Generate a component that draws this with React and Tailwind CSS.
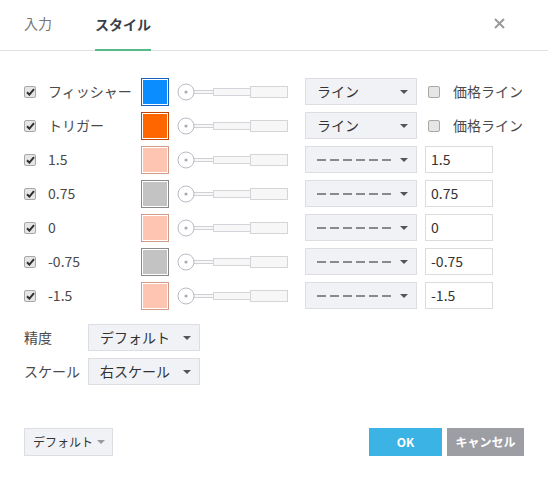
import React from "react";

const font = { fontFamily: '"Noto Sans CJK JP", "Noto Sans", sans-serif' };

const rows = [
  { label: "フィッシャー", fill: "bg-[#0a8dff]", border: "border-[#1560bd]", kind: "line", value: "ライン" },
  { label: "トリガー", fill: "bg-[#ff6600]", border: "border-[#c24400]", kind: "line", value: "ライン" },
  { label: "1.5", fill: "bg-[#ffc5b3]", border: "border-[#d49a88]", kind: "dash", value: "1.5" },
  { label: "0.75", fill: "bg-[#c3c3c3]", border: "border-[#8a8a8a]", kind: "dash", value: "0.75" },
  { label: "0", fill: "bg-[#ffc5b3]", border: "border-[#d49a88]", kind: "dash", value: "0" },
  { label: "-0.75", fill: "bg-[#c3c3c3]", border: "border-[#8a8a8a]", kind: "dash", value: "-0.75" },
  { label: "-1.5", fill: "bg-[#ffc5b3]", border: "border-[#d49a88]", kind: "dash", value: "-1.5" },
];

function Check({ checked }) {
  return (
    <span className="w-[12px] h-[12px] rounded-[2px] border border-[#a8a8a8] bg-[#e6e6e6] flex items-center justify-center shrink-0">
      {checked && (
        <svg width="9" height="8" viewBox="0 0 9 8">
          <path d="M1 4.2 L3.4 6.6 L8 1.2" stroke="#2f2f2f" strokeWidth="2" fill="none" />
        </svg>
      )}
    </span>
  );
}

function Caret({ color = "#555" }) {
  return (
    <svg width="8" height="4" viewBox="0 0 8 4">
      <path d="M0 0 H8 L4 4 Z" fill={color} />
    </svg>
  );
}

function Slider() {
  return (
    <svg width="112" height="18" viewBox="0 0 112 18" className="shrink-0">
      <rect x="16.5" y="7.5" width="20" height="3" fill="#f7f7f7" stroke="#cfd1d6" />
      <rect x="36.5" y="5.5" width="37" height="7" fill="#f7f7f7" stroke="#d4d5d8" />
      <rect x="73.5" y="3.5" width="37" height="11" fill="#f7f7f7" stroke="#d4d5d8" />
      <circle cx="9" cy="9" r="8" fill="#fff" stroke="#b9bcc6" />
      <circle cx="9" cy="9" r="1.6" fill="#a9acb6" />
    </svg>
  );
}

function Select({ w, children, caretColor }) {
  return (
    <div
      className={`${w} h-[27px] bg-[#f1f2f6] border border-[#dcdee3] flex items-center justify-between pl-[11px] pr-[8px] text-[14px] text-[#333] shrink-0`}
    >
      <span className="flex items-center">{children}</span>
      <Caret color={caretColor} />
    </div>
  );
}

function Dashes() {
  return (
    <svg width="74" height="2" viewBox="0 0 74 2">
      <line x1="0" y1="1" x2="74" y2="1" stroke="#8a8a8a" strokeWidth="2" strokeDasharray="9 4" />
    </svg>
  );
}

export default function App() {
  return (
    <div className="w-[548px] h-[481px] bg-white flex flex-col text-[#4a4a4a]" style={font}>
      <div className="h-[51px] border-b border-[#e1e1e1] flex items-end justify-between pl-[24px] pr-[43px] shrink-0">
        <div className="flex items-end gap-[43px]">
          <div className="pb-[16px] text-[14px] text-[#777]">入力</div>
          <div className="pb-[14px] border-b-2 border-[#55b98a] text-[14px] font-bold text-[#3a3f4a] -mb-px">
            スタイル
          </div>
        </div>
        <svg width="11" height="11" viewBox="0 0 11 11" className="mb-[21px]">
          <path d="M1 1 L10 10 M10 1 L1 10" stroke="#9a9a9a" strokeWidth="2" />
        </svg>
      </div>

      <div className="flex flex-col gap-[7px] pl-[24px] pt-[27px]">
        {rows.map((r, i) => (
          <div key={i} className="h-[27px] flex items-center">
            <Check checked />
            <span className="ml-[12px] w-[93px] text-[14px] text-[#4a4a4a]">{r.label}</span>
            <span className={`w-[28px] h-[28px] border ${r.border} p-px bg-white shrink-0`}>
              <span className={`block w-full h-full ${r.fill}`} />
            </span>
            <span className="ml-[8px]">
              <Slider />
            </span>
            <span className="ml-[16px]">
              <Select w="w-[112px]">
                {r.kind === "line" ? "ライン" : <Dashes />}
              </Select>
            </span>
            {r.kind === "line" ? (
              <span className="ml-[11px] flex items-center">
                <Check />
                <span className="ml-[13px] text-[14px]">価格ライン</span>
              </span>
            ) : (
              <span className="ml-[8px] w-[68px] h-[27px] border border-[#dcdcdc] bg-white flex items-center pl-[5px] text-[14px] text-[#333]">
                {r.value}
              </span>
            )}
          </div>
        ))}
      </div>

      <div className="flex flex-col gap-[7px] pl-[24px] pt-[15px]">
        <div className="flex items-center h-[27px]">
          <span className="w-[64px] text-[14px]">精度</span>
          <Select w="w-[112px]">デフォルト</Select>
        </div>
        <div className="flex items-center h-[27px]">
          <span className="w-[64px] text-[14px]">スケール</span>
          <Select w="w-[112px]">右スケール</Select>
        </div>
      </div>

      <div className="flex items-center justify-between pl-[24px] pr-[24px] mt-[43px]">
        <div className="w-[89px] h-[28px] bg-[#f1f2f6] border border-[#dcdee3] flex items-center justify-between pl-[8px] pr-[7px] text-[12px] text-[#333]">
          デフォルト
          <Caret color="#999" />
        </div>
        <div className="flex gap-[5px]">
          <button className="w-[73px] h-[28px] bg-[#3bb3e5] text-white text-[12px] font-bold">OK</button>
          <button className="w-[77px] h-[28px] bg-[#9c9ea4] text-white text-[12px] font-bold">キャンセル</button>
        </div>
      </div>
    </div>
  );
}
